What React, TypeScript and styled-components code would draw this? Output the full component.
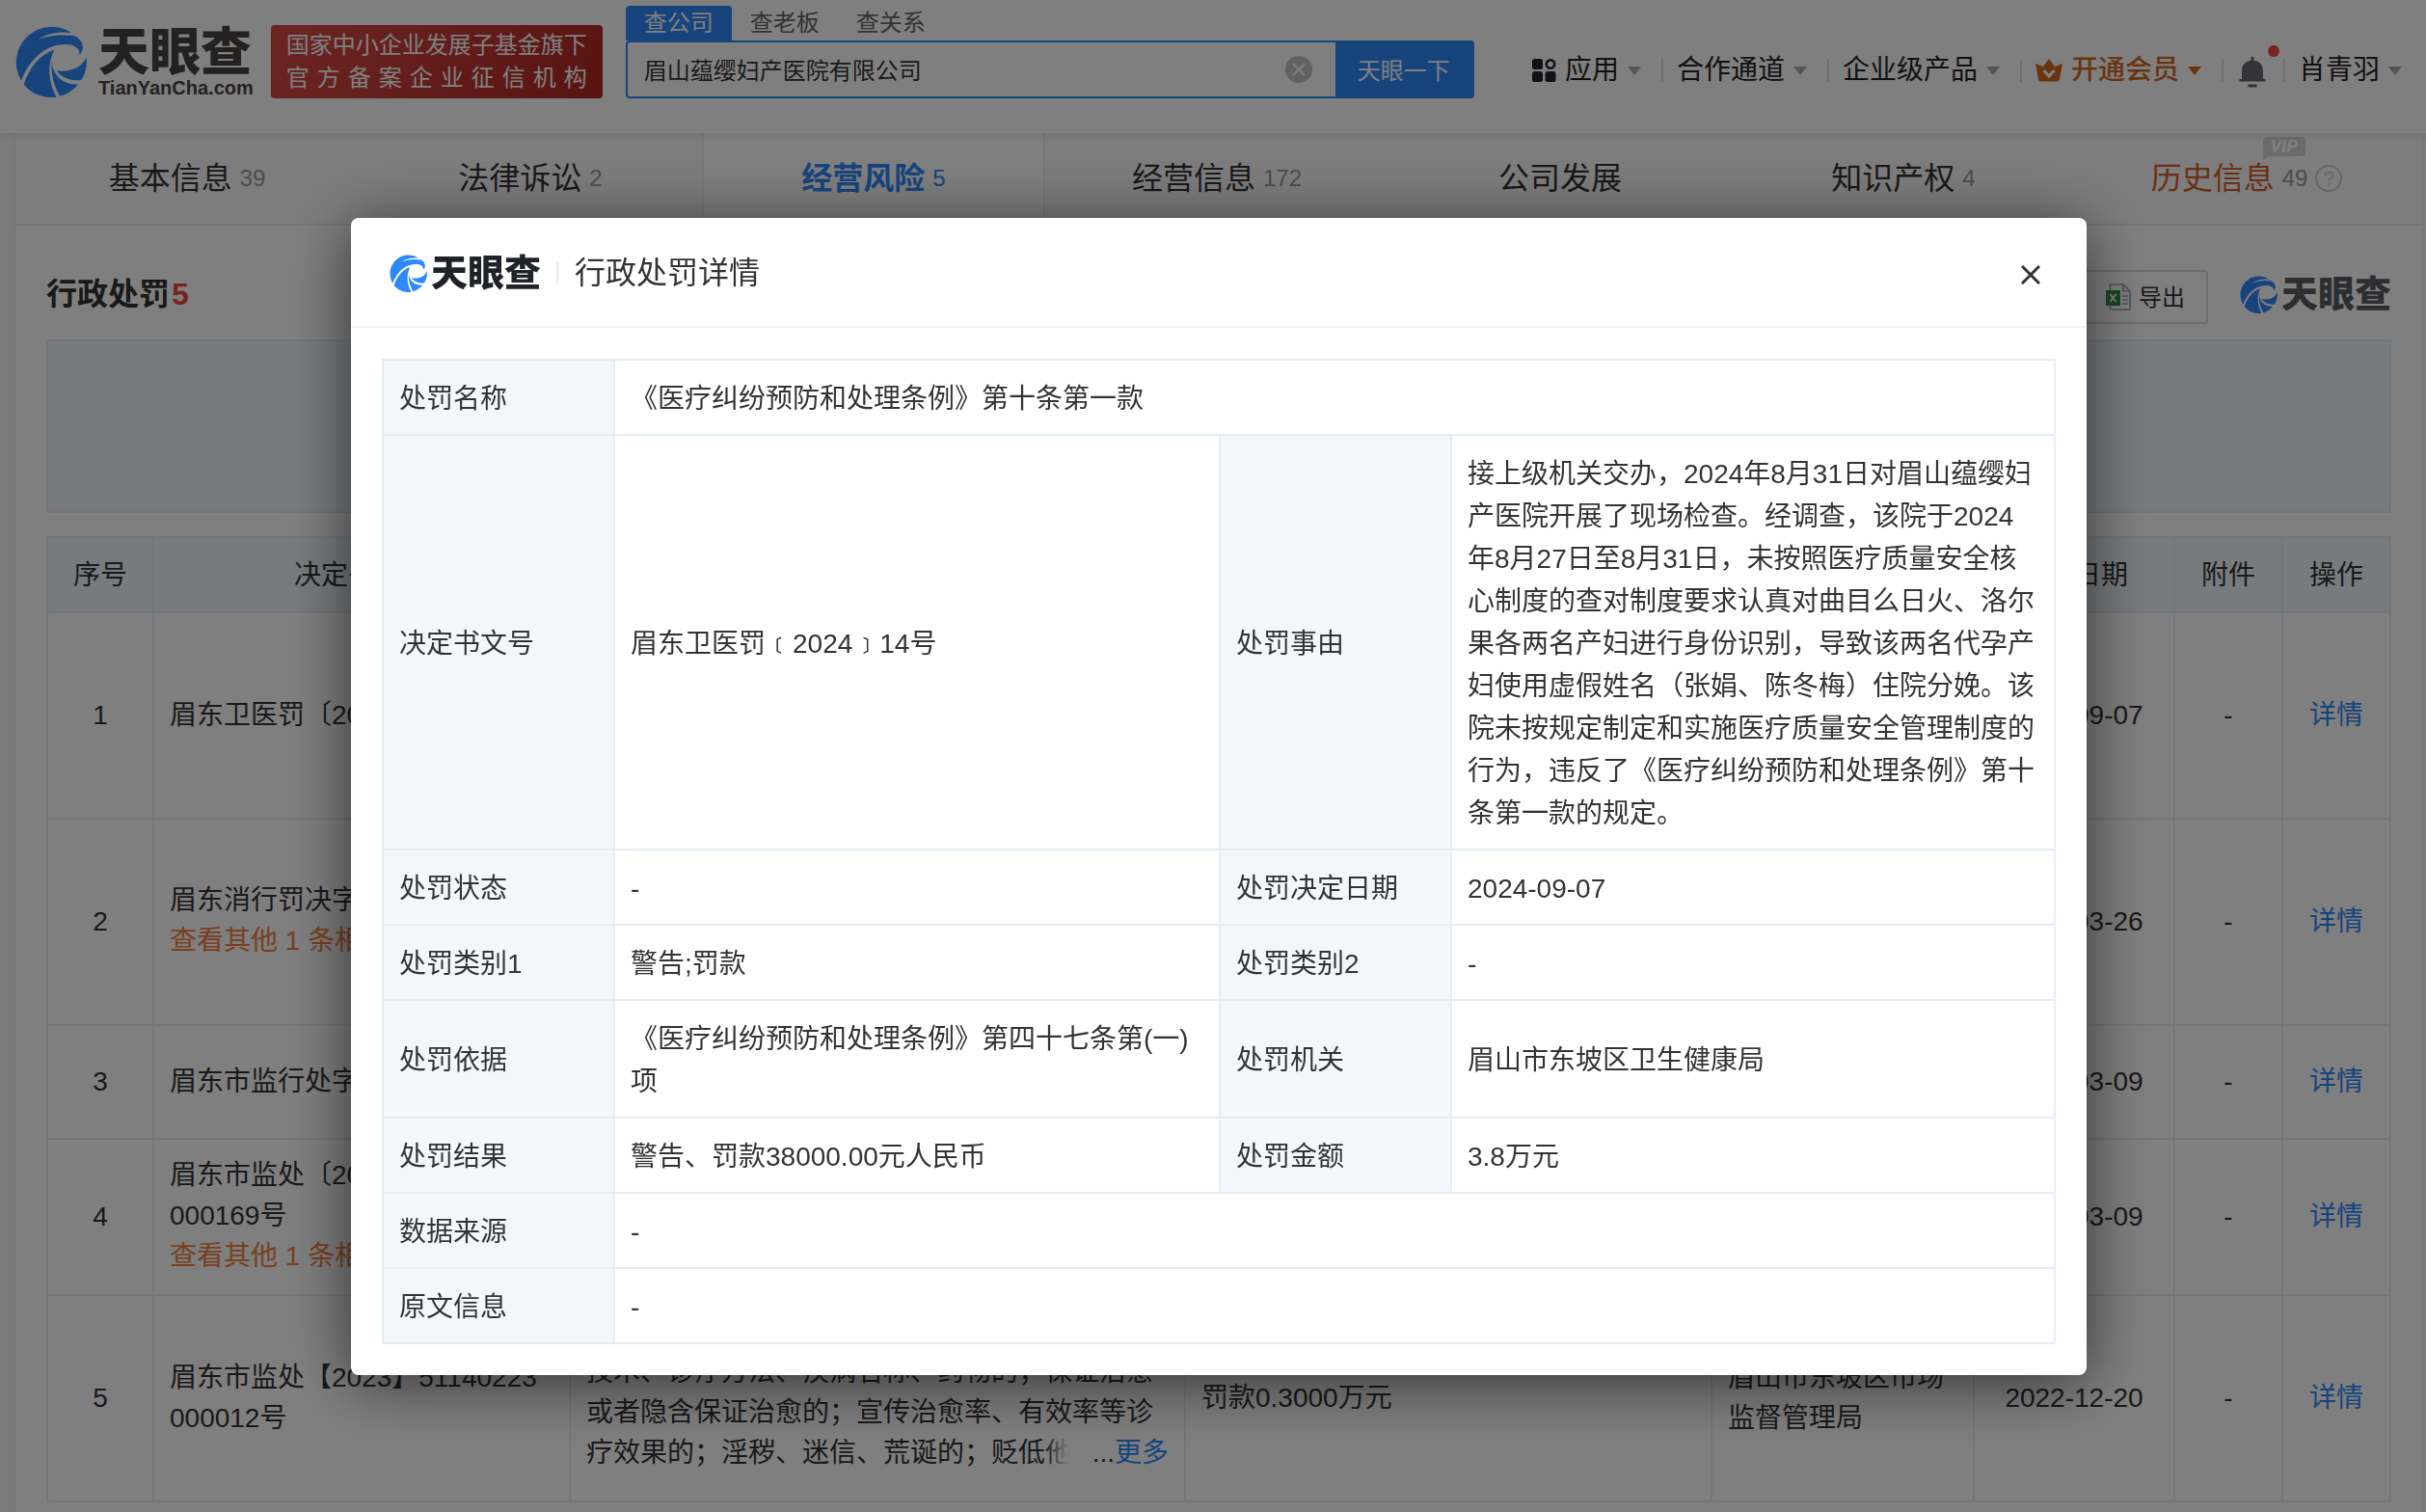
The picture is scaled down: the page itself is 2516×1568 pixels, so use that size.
import React from "react";
import styled, { createGlobalStyle, css } from "styled-components";

const blue = "#2f88fa";
const ink = "#333333";
const line = "#e4eef6";
const labelBg = "#f2f7fc";
const panelBg = "#eef7fc";

const GlobalStyle = createGlobalStyle`
  *, *::before, *::after { box-sizing: border-box; }
  body {
    margin: 0;
    overflow: hidden;
    background: #f6f6f6;
    color: ${ink};
    font-family: "Liberation Sans", "Noto Sans CJK SC", sans-serif;
    font-size: 28px;
    line-height: 42px;
  }
  button, input { font-family: inherit; font-size: inherit; color: inherit; margin: 0; }
  button { border: 0; padding: 0; background: none; cursor: pointer; }
  a { color: inherit; text-decoration: none; }
  svg { display: block; flex: none; }
`;

/* ---------- brand ---------- */

const BrandRow = styled.div<{ $gap: number }>`
  display: flex;
  align-items: center;
  gap: ${(p) => p.$gap}px;
`;

const BrandName = styled.span<{ $size: number; $color: string }>`
  font-size: ${(p) => p.$size}px;
  line-height: ${(p) => p.$size}px;
  font-weight: 900;
  color: ${(p) => p.$color};
  white-space: nowrap;
`;

const BrandText = styled.div`
  display: flex;
  flex-direction: column;
`;

const BrandDomain = styled.span`
  font-size: 20px;
  line-height: 20px;
  font-weight: 700;
  color: #464442;
`;

function Mark({ size }: { size: number }) {
  return (
    <svg width={size} height={size} viewBox="50 50 223 223" fill={blue} aria-hidden="true">
      <path d="M68 220A111 111 0 0 1 225 71C190 66 150 72 122 92C150 80 195 74 238 82C262 98 268 120 250 141C252 118 235 107 205 107C140 108 95 155 68 220Z" />
      <path d="M76 232C95 180 125 140 172 124C150 165 150 220 178 272A111 111 0 0 1 76 232Z" />
      <path d="M164 160C165 200 195 235 246 232A111 111 0 0 1 189 269C170 235 160 200 164 160Z" />
      <path d="M178 189C215 195 255 185 272 148A111 111 0 0 1 256 219C225 222 195 212 178 189Z" />
    </svg>
  );
}

function SmallBrand({ color }: { color: string }) {
  return (
    <BrandRow $gap={4}>
      <Mark size={39} />
      <BrandName $size={38} $color={color}>天眼查</BrandName>
    </BrandRow>
  );
}

/* ---------- header ---------- */

const Header = styled.header`
  position: relative;
  z-index: 1;
  display: flex;
  align-items: flex-start;
  height: 138px;
  padding: 0 25px 0 16px;
  background: #fff;
  box-shadow: 0 2px 10px rgba(0, 0, 0, 0.1);
`;

const HomeLink = styled.a`
  padding-top: 27px;
`;

const Banner = styled.div`
  display: flex;
  flex-direction: column;
  justify-content: center;
  width: 344px;
  height: 76px;
  margin: 26px 24px 0 18px;
  padding: 0 16px;
  border-radius: 4px;
  background: linear-gradient(120deg, #d94b47, #b12824);
  color: #fff;
  font-size: 24px;
  line-height: 34px;
`;

const BannerLine = styled.div`
  text-align: justify;
  text-align-last: justify;
`;

const Search = styled.form`
  width: 880px;
  padding-top: 6px;
`;

const SearchTabs = styled.div`
  display: flex;
`;

const SearchTab = styled.button<{ $active?: boolean }>`
  width: 110px;
  height: 36px;
  border-radius: 4px 4px 0 0;
  font-size: 24px;
  line-height: 36px;
  color: ${(p) => (p.$active ? "#fff" : "#666")};
  background: ${(p) => (p.$active ? blue : "transparent")};
`;

const SearchBox = styled.div`
  display: flex;
  align-items: center;
  height: 60px;
  border: 2px solid ${blue};
  border-radius: 4px;
`;

const SearchInput = styled.input`
  flex: 1;
  min-width: 0;
  height: 56px;
  padding: 0 17px 2px;
  border: 0;
  outline: 0;
  background: transparent;
  font-size: 24px;
`;

const ClearButton = styled.button`
  margin-right: 24px;
`;

const SearchButton = styled.button`
  width: 142px;
  height: 56px;
  padding-bottom: 2px;
  background: ${blue};
  color: #fff;
  font-size: 24px;
`;

const UserNav = styled.nav`
  display: flex;
  align-items: center;
  height: 42px;
  margin: 52px 0 0 auto;
`;

const NavItem = styled.a<{ $vip?: boolean }>`
  display: flex;
  align-items: center;
  gap: 9px;
  white-space: nowrap;
  color: ${(p) => (p.$vip ? "#d3681f" : "#222")};
  font-weight: ${(p) => (p.$vip ? 500 : 400)};
`;

const NavDivider = styled.span<{ $before?: number }>`
  width: 2px;
  height: 24px;
  margin: 0 14px 0 ${(p) => p.$before ?? 21}px;
  background: #e0e0e0;
`;

const BellLink = styled.a`
  position: relative;
  margin: 4px 0 0 2px;
`;

const BellDot = styled.span`
  position: absolute;
  top: -12px;
  right: -14px;
  width: 12px;
  height: 12px;
  border-radius: 50%;
  background: #ef4840;
`;

const Caret = styled.span<{ $color?: string }>`
  width: 0;
  height: 0;
  border: 7px solid transparent;
  border-top: 9px solid ${(p) => p.$color || "#a8a8a8"};
  border-bottom: 0;
`;

function AppsIcon() {
  return (
    <svg width="25" height="24" viewBox="0 0 25 24" fill="#20242c" aria-hidden="true">
      <rect x="0" y="0" width="11" height="11" rx="2.5" />
      <circle cx="19" cy="5.5" r="4.2" fill="none" stroke="#20242c" strokeWidth="2.6" />
      <rect x="0" y="13" width="11" height="11" rx="2.5" />
      <rect x="13.5" y="13" width="11" height="11" rx="2.5" />
    </svg>
  );
}

function CrownIcon() {
  return (
    <svg width="28" height="24" viewBox="0 0 28 24" aria-hidden="true">
      <path d="M14 0L20 8L28 5L25 21Q24.500 23.500 22 23.500H6Q3.500 23.500 3 21L0 5L8 8Z" fill="#d3681f" />
      <path d="M8.500 12L14 18L19.500 12" fill="none" stroke="#fff" strokeWidth="3" />
    </svg>
  );
}

function BellIcon() {
  return (
    <svg width="28" height="32" viewBox="0 0 28 32" fill="#646970" aria-hidden="true">
      <path d="M12.500 0H15.500V3.500C21 4.500 25 8.500 25 14V23H27.500V25.500H.5V23H3V14C3 8.500 7 4.500 12.500 3.500Z" />
      <rect x="9.500" y="28.500" width="9" height="3" />
    </svg>
  );
}

function ClearIcon() {
  return (
    <svg width="28" height="28" viewBox="0 0 28 28" aria-hidden="true">
      <circle cx="14" cy="14" r="14" fill="#c2c2c2" />
      <path d="M8 8L20 20M20 8L8 20" stroke="#fff" strokeWidth="2" />
    </svg>
  );
}

/* ---------- page ---------- */

const Page = styled.main`
  margin: 0 4px 0 16px;
  background: #fff;
  box-shadow: 0 0 4px rgba(0, 0, 0, 0.08);
`;

const Tabs = styled.nav`
  display: flex;
  height: 96px;
  padding-right: 4px;
  border-bottom: 2px solid #eeeeee;
  background: #fbfbfb;
`;

const Tab = styled.a<{ $tone?: "active" | "history" }>`
  flex: 1;
  display: flex;
  justify-content: center;
  align-items: center;
  gap: 8px;
  font-size: 32px;
  line-height: 48px;
  ${(p) =>
    p.$tone === "active" &&
    css`
      background: #fff;
      box-shadow: inset 2px 0 #eeeeee, inset -2px 0 #eeeeee;
      color: ${blue};
      font-weight: 700;
    `}
  ${(p) => p.$tone === "history" && css`color: #d3602a;`}
`;

const TabName = styled.span`
  position: relative;
`;

const TabCount = styled.span<{ $active?: boolean }>`
  font-size: 24px;
  font-weight: 400;
  color: ${(p) => (p.$active ? blue : "#999")};
`;

const VipBadge = styled.span`
  position: absolute;
  top: -19px;
  right: -32px;
  width: 44px;
  height: 20px;
  border-radius: 4px 4px 4px 0;
  background: #d6d6d6;
  color: #fff;
  font-size: 18px;
  line-height: 20px;
  font-weight: 700;
  font-style: italic;
  text-align: center;
  &::after {
    content: "";
    position: absolute;
    left: 0;
    top: 20px;
    border-top: 4px solid #d6d6d6;
    border-right: 6px solid transparent;
  }
`;

const Help = styled.span`
  width: 28px;
  height: 28px;
  border: 2px solid #cfcfcf;
  border-radius: 50%;
  color: #cfcfcf;
  font-size: 20px;
  line-height: 24px;
  text-align: center;
`;

const Section = styled.section`
  padding: 46px 32px 10px;
`;

const SectionBar = styled.div`
  display: flex;
  align-items: flex-start;
  height: 72px;
`;

const SectionTitle = styled.h2`
  margin: 0 auto 0 0;
  font-size: 32px;
  line-height: 50px;
  font-weight: 700;
`;

const SectionCount = styled.span`
  padding-left: 2px;
  color: #ef4840;
`;

const ExportButton = styled.button`
  display: flex;
  align-items: center;
  gap: 8px;
  height: 56px;
  margin-right: 33px;
  padding: 0 22px;
  border: 2px solid #dadada;
  border-radius: 4px;
  font-size: 24px;
`;

const ExportText = styled.span`
  padding-bottom: 4px;
`;

const SectionBrand = styled.div`
  display: flex;
  align-items: center;
  height: 50px;
`;

const FilterPanel = styled.div`
  height: 180px;
  margin-bottom: 24px;
  border: 2px solid ${line};
  background: ${panelBg};
`;

function ExcelIcon() {
  return (
    <svg width="26" height="28" viewBox="0 0 26 28" aria-hidden="true">
      <path d="M4.500 1H18L25 8V27H4.500Z" fill="#fff" stroke="#9aa1a8" strokeWidth="1.600" />
      <path d="M18 1V8H25" fill="none" stroke="#9aa1a8" strokeWidth="1.600" />
      <path d="M17 13H23M17 17H23M17 21H23" stroke="#9aa1a8" strokeWidth="1.600" />
      <rect x="0" y="7" width="15" height="16" fill="#2f8f3c" />
      <path d="M4.500 11L10.500 19M10.500 11L4.500 19" stroke="#fff" strokeWidth="2" />
    </svg>
  );
}

/* ---------- tables ---------- */

const tableBase = css`
  width: 100%;
  table-layout: fixed;
  border-collapse: collapse;
  th, td {
    border: 2px solid ${line};
    font-weight: 400;
    text-align: left;
    vertical-align: middle;
    word-break: break-all;
  }
`;

const Col = styled.col<{ $w?: number }>`
  width: ${(p) => (p.$w ? `${p.$w}px` : "auto")};
`;

const ListTable = styled.table`
  ${tableBase}
  thead th {
    padding: 18px 16px 16px;
    background: ${panelBg};
    text-align: center;
  }
`;

const Cell = styled.td<{ $center?: boolean }>`
  && {
    padding: 16px;
    ${(p) => p.$center && css`padding: 16px 0; text-align: center;`}
  }
`;

const MoreLink = styled.a`
  color: ${blue};
`;

const RelatedLink = styled.a`
  display: block;
  padding-bottom: 2px;
  color: #f08040;
`;

const Clamp = styled.div<{ $folded: boolean }>`
  position: relative;
  ${(p) =>
    p.$folded &&
    css`
      max-height: 168px;
      margin-bottom: 12px;
      overflow: hidden;
    `}
`;

const Unfold = styled.span`
  position: absolute;
  right: 0;
  bottom: 0;
  padding-left: 50px;
  background: linear-gradient(90deg, rgba(255, 255, 255, 0), #fff 26px);
`;

const DetailTable = styled.table`
  ${tableBase}
  line-height: 44px;
  th, td { padding: 18px 16px 14px; }
  th { background: ${labelBg}; }
`;

/* ---------- dialog ---------- */

const Overlay = styled.div`
  position: fixed;
  inset: 0;
  z-index: 10;
  display: flex;
  justify-content: center;
  align-items: flex-start;
  padding: 226px 0 0 12px;
  background: rgba(0, 0, 0, 0.5);
`;

const Dialog = styled.div`
  width: 1800px;
  max-width: 96%;
  border-radius: 8px;
  background: #fff;
  box-shadow: 0 8px 64px rgba(0, 0, 0, 0.6);
`;

const DialogHeader = styled.div`
  display: flex;
  align-items: center;
  height: 114px;
  padding: 2px 44px 0 40px;
  border-bottom: 2px solid #f2f3f4;
`;

const DialogDivider = styled.span`
  width: 2px;
  height: 24px;
  margin: 0 17px 0 16px;
  background: #e6e8eb;
`;

const DialogTitle = styled.h1`
  margin: 0 auto 0 0;
  font-size: 32px;
  line-height: 48px;
  font-weight: 400;
`;

const CloseButton = styled.button`
  padding: 6px 4px 2px;
`;

const DialogBody = styled.div`
  padding: 32px;
`;

/* ---------- data ---------- */

type Tone = "active" | "history" | undefined;
const tabs: { name: string; count?: string; tone?: Tone }[] = [
  { name: "基本信息", count: "39" },
  { name: "法律诉讼", count: "2" },
  { name: "经营风险", count: "5", tone: "active" },
  { name: "经营信息", count: "172" },
  { name: "公司发展" },
  { name: "知识产权", count: "4" },
  { name: "历史信息", count: "49", tone: "history" },
];

const columns: { name: string; width?: number }[] = [
  { name: "序号", width: 110 },
  { name: "决定书文号", width: 432 },
  { name: "处罚事由" },
  { name: "处罚结果", width: 546 },
  { name: "处罚单位", width: 272 },
  { name: "处罚日期", width: 208 },
  { name: "附件", width: 112 },
  { name: "操作", width: 112 },
];

const hospitalCause =
  "接上级机关交办，2024年8月31日对眉山蕴缨妇产医院开展了现场检查。经调查，该院于2024年8月27日至8月31日，未按照医疗质量安全核心制度的查对制度要求认真对";
const fireCause =
  "接上级机关交办，对眉山蕴缨妇产医院开展了消防监督检查。经调查，该院消防设施、器材未保持完好有效，违反了《中华人民共和国消防法》第十六条第一款第二项的规定，责令限期改正";
const adCause =
  "当事人发布医疗广告中含有以下情形：涉及医疗技术、诊疗方法、疾病名称、药物的；保证治愈或者隐含保证治愈的；宣传治愈率、有效率等诊疗效果的；淫秽、迷信、荒诞的；贬低他人";

interface Row {
  doc: string[];
  related?: boolean;
  cause: string;
  folded?: boolean;
  result: string;
  org: string;
  date: string;
}

const rows: Row[] = [
  { doc: ["眉东卫医罚〔2024〕14号"], cause: hospitalCause, folded: true, result: "警告、罚款38000.00元", org: "眉山市东坡区卫生健康局", date: "2024-09-07" },
  { doc: ["眉东消行罚决字〔2024〕"], related: true, cause: fireCause, folded: true, result: "罚款", org: "眉山市东坡区消防救援大队", date: "2024-03-26" },
  { doc: ["眉东市监行处字〔2023〕"], cause: "违反了《中华人民共和国广告法》第四十六条的规定", result: "罚款", org: "眉山市东坡区市场监督管理局", date: "2023-03-09" },
  { doc: ["眉东市监处〔2023〕51140223", "000169号"], related: true, cause: "违反了《中华人民共和国广告法》的规定", result: "罚款", org: "眉山市东坡区市场监督管理局", date: "2023-03-09" },
  { doc: ["眉东市监处【2023】51140223", "000012号"], cause: adCause, folded: true, result: "罚款0.3000万元", org: "眉山市东坡区市场监督管理局", date: "2022-12-20" },
];

const details: string[][] = [
  ["处罚名称", "《医疗纠纷预防和处理条例》第十条第一款"],
  [
    "决定书文号",
    "眉东卫医罚﹝2024﹞14号",
    "处罚事由",
    "接上级机关交办，2024年8月31日对眉山蕴缨妇产医院开展了现场检查。经调查，该院于2024年8月27日至8月31日，未按照医疗质量安全核心制度的查对制度要求认真对曲目么日火、洛尔果各两名产妇进行身份识别，导致该两名代孕产妇使用虚假姓名（张娟、陈冬梅）住院分娩。该院未按规定制定和实施医疗质量安全管理制度的行为，违反了《医疗纠纷预防和处理条例》第十条第一款的规定。",
  ],
  ["处罚状态", "-", "处罚决定日期", "2024-09-07"],
  ["处罚类别1", "警告;罚款", "处罚类别2", "-"],
  ["处罚依据", "《医疗纠纷预防和处理条例》第四十七条第(一)项", "处罚机关", "眉山市东坡区卫生健康局"],
  ["处罚结果", "警告、罚款38000.00元人民币", "处罚金额", "3.8万元"],
  ["数据来源", "-"],
  ["原文信息", "-"],
];

/* ---------- views ---------- */

function TopBar() {
  return (
    <Header>
      <HomeLink href="#" aria-label="天眼查首页">
        <BrandRow $gap={12}>
          <Mark size={74} />
          <BrandText>
            <BrandName $size={53} $color="#464442">天眼查</BrandName>
            <BrandDomain>TianYanCha.com</BrandDomain>
          </BrandText>
        </BrandRow>
      </HomeLink>
      <Banner>
        <BannerLine>国家中小企业发展子基金旗下</BannerLine>
        <BannerLine>官方备案企业征信机构</BannerLine>
      </Banner>
      <Search onSubmit={(e) => e.preventDefault()}>
        <SearchTabs>
          <SearchTab type="button" $active>查公司</SearchTab>
          <SearchTab type="button">查老板</SearchTab>
          <SearchTab type="button">查关系</SearchTab>
        </SearchTabs>
        <SearchBox>
          <SearchInput aria-label="公司名称" defaultValue="眉山蕴缨妇产医院有限公司" />
          <ClearButton type="button" aria-label="清空"><ClearIcon /></ClearButton>
          <SearchButton type="submit">天眼一下</SearchButton>
        </SearchBox>
      </Search>
      <UserNav>
        <NavItem href="#"><AppsIcon />应用<Caret /></NavItem>
        <NavDivider />
        <NavItem href="#">合作通道<Caret /></NavItem>
        <NavDivider />
        <NavItem href="#">企业级产品<Caret /></NavItem>
        <NavDivider />
        <NavItem href="#" $vip><CrownIcon />开通会员<Caret $color="#d3681f" /></NavItem>
        <NavDivider />
        <BellLink href="#" aria-label="消息"><BellIcon /><BellDot /></BellLink>
        <NavDivider $before={18} />
        <NavItem href="#">肖青羽<Caret /></NavItem>
      </UserNav>
    </Header>
  );
}

function CompanyTabs() {
  return (
    <Tabs>
      {tabs.map((t) => (
        <Tab key={t.name} href="#" $tone={t.tone}>
          <TabName>
            {t.name}
            {t.tone === "history" && <VipBadge>VIP</VipBadge>}
          </TabName>
          {t.count && <TabCount $active={t.tone === "active"}>{t.count}</TabCount>}
          {t.tone === "history" && <Help>?</Help>}
        </Tab>
      ))}
    </Tabs>
  );
}

function PenaltyList() {
  return (
    <ListTable>
      <colgroup>
        {columns.map((c) => <Col key={c.name} $w={c.width} />)}
      </colgroup>
      <thead>
        <tr>{columns.map((c) => <th key={c.name} scope="col">{c.name}</th>)}</tr>
      </thead>
      <tbody>
        {rows.map((r, i) => (
          <tr key={r.doc.join("")}>
            <Cell $center>{i + 1}</Cell>
            <Cell>
              {r.doc.map((d) => <div key={d}>{d}</div>)}
              {r.related && <RelatedLink href="#">查看其他 1 条相关公告</RelatedLink>}
            </Cell>
            <Cell>
              <Clamp $folded={!!r.folded}>
                {r.cause}
                {r.folded && <Unfold>...<MoreLink href="#">更多</MoreLink></Unfold>}
              </Clamp>
            </Cell>
            <Cell>{r.result}</Cell>
            <Cell>{r.org}</Cell>
            <Cell $center>{r.date}</Cell>
            <Cell $center>-</Cell>
            <Cell $center><MoreLink href="#">详情</MoreLink></Cell>
          </tr>
        ))}
      </tbody>
    </ListTable>
  );
}

function PenaltyDialog() {
  return (
    <Overlay>
      <Dialog role="dialog" aria-modal="true" aria-labelledby="dialog-title">
        <DialogHeader>
          <SmallBrand color="#1f2229" />
          <DialogDivider />
          <DialogTitle id="dialog-title">行政处罚详情</DialogTitle>
          <CloseButton type="button" aria-label="关闭">
            <svg width="20" height="20" viewBox="0 0 20 20" aria-hidden="true">
              <path d="M1 1L19 19M19 1L1 19" stroke="#333" strokeWidth="3" />
            </svg>
          </CloseButton>
        </DialogHeader>
        <DialogBody>
          <DetailTable>
            <colgroup>
              <Col $w={240} />
              <Col />
              <Col $w={240} />
              <Col $w={626} />
            </colgroup>
            <tbody>
              {details.map(([k1, v1, k2, v2]) => (
                <tr key={k1}>
                  <th scope="row">{k1}</th>
                  <td colSpan={k2 ? 1 : 3}>{v1}</td>
                  {k2 && <th scope="row">{k2}</th>}
                  {k2 && <td>{v2}</td>}
                </tr>
              ))}
            </tbody>
          </DetailTable>
        </DialogBody>
      </Dialog>
    </Overlay>
  );
}

export default function App() {
  return (
    <>
      <GlobalStyle />
      <TopBar />
      <Page>
        <CompanyTabs />
        <Section>
          <SectionBar>
            <SectionTitle>行政处罚<SectionCount>5</SectionCount></SectionTitle>
            <ExportButton type="button"><ExcelIcon /><ExportText>导出</ExportText></ExportButton>
            <SectionBrand><SmallBrand color="#5a5c60" /></SectionBrand>
          </SectionBar>
          <FilterPanel />
          <PenaltyList />
        </Section>
      </Page>
      <PenaltyDialog />
    </>
  );
}
